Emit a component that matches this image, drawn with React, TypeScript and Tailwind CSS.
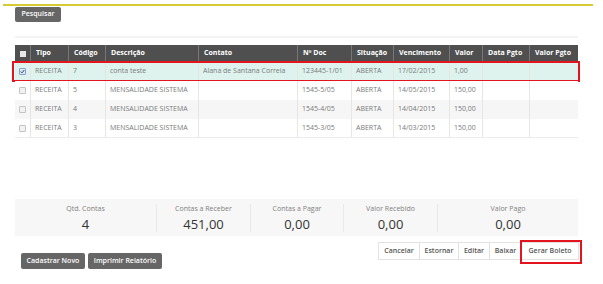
import React from 'react';

const cols = [
  { key: 'chk', label: '', w: 'w-[16px]' },
  { key: 'tipo', label: 'Tipo', w: 'w-[38px]' },
  { key: 'codigo', label: 'Código', w: 'w-[37px]' },
  { key: 'desc', label: 'Descrição', w: 'w-[93px]' },
  { key: 'contato', label: 'Contato', w: 'w-[99px]' },
  { key: 'doc', label: 'Nº Doc', w: 'w-[54px]' },
  { key: 'sit', label: 'Situação', w: 'w-[42px]' },
  { key: 'venc', label: 'Vencimento', w: 'w-[56px]' },
  { key: 'valor', label: 'Valor', w: 'w-[33px]' },
  { key: 'dataPgto', label: 'Data Pgto', w: 'w-[47px]' },
  { key: 'valorPgto', label: 'Valor Pgto', w: 'w-[48px]' },
];

const rows = [
  { tipo: 'RECEITA', codigo: '7', desc: 'conta teste', contato: 'Alana de Santana Correia', doc: '123445-1/01', sit: 'ABERTA', venc: '17/02/2015', valor: '1,00', selected: true },
  { tipo: 'RECEITA', codigo: '5', desc: 'MENSALIDADE SISTEMA', contato: '', doc: '1545-5/05', sit: 'ABERTA', venc: '14/05/2015', valor: '150,00' },
  { tipo: 'RECEITA', codigo: '4', desc: 'MENSALIDADE SISTEMA', contato: '', doc: '1545-4/05', sit: 'ABERTA', venc: '14/04/2015', valor: '150,00' },
  { tipo: 'RECEITA', codigo: '3', desc: 'MENSALIDADE SISTEMA', contato: '', doc: '1545-3/05', sit: 'ABERTA', venc: '14/03/2015', valor: '150,00' },
];

const totals = [
  { label: 'Qtd. Contas', value: '4', w: 'w-[141px]' },
  { label: 'Contas a Receber', value: '451,00', w: 'w-[94px]' },
  { label: 'Contas a Pagar', value: '0,00', w: 'w-[93px]' },
  { label: 'Valor Recebido', value: '0,00', w: 'w-[94px]' },
  { label: 'Valor Pago', value: '0,00', w: 'w-[141px]' },
];

const actions = [
  { label: 'Cancelar', w: 'w-[42px]' },
  { label: 'Estornar', w: 'w-[40px]' },
  { label: 'Editar', w: 'w-[32px]' },
  { label: 'Baixar', w: 'w-[33px]' },
];

const Checkbox = ({ checked = false, header = false }: { checked?: boolean; header?: boolean }) => {
  if (header) return <span className="block w-[6px] h-[6px] bg-[#e8e8e8]" />;
  return (
    <span
      className={`flex items-center justify-center w-[7px] h-[7px] rounded-[1px] border ${
        checked ? 'border-[#8aa2c8] bg-[#dfe8f6]' : 'border-[#c4c4c4] bg-[#f2f2f2]'
      }`}
    >
      {checked && (
        <svg width="5" height="5" viewBox="0 0 10 10">
          <path d="M1.5 5.2 L4 7.7 L8.6 2" stroke="#2a3f66" strokeWidth="2" fill="none" />
        </svg>
      )}
    </span>
  );
};

export default function App() {
  return (
    <div className="relative w-[603px] h-[284px] bg-white overflow-hidden text-[#777]" style={{ fontFamily: '"Open Sans", "Liberation Sans", sans-serif' }}>
      <div className="ml-[3px] mt-[4px] w-[590px] h-[2px] bg-[#d6cb35]" />

      <button className="ml-[15px] mt-[1px] w-[46px] h-[15px] bg-[#666] rounded-[2px] text-white text-[7px] font-semibold flex items-center justify-center">
        Pesquisar
      </button>

      <div className="ml-[15px] mt-[14px] w-[563px] h-[2px] bg-[#f3f3f3]" />

      {/* grid */}
      <div className="ml-[15px] mt-[7px] w-[563px]">
        <div className="flex h-[17px] bg-[#4f4f4f] text-white text-[7px] font-bold">
          {cols.map((c, i) => (
            <div
              key={c.key}
              className={`${c.w} flex items-center ${i === 0 ? 'justify-center' : 'px-[5px]'} ${i < cols.length - 1 ? 'border-r border-[#777]' : ''}`}
            >
              {i === 0 ? <Checkbox header /> : c.label}
            </div>
          ))}
        </div>

        {rows.map((r, ri) => {
          const cells = ['', r.tipo, r.codigo, r.desc, r.contato, r.doc, r.sit, r.venc, r.valor, '', ''];
          const bg = r.selected ? 'bg-[#def3ee]' : ri === 2 ? 'bg-[#f6f6f6]' : 'bg-white';
          return (
            <div key={ri} className={`relative flex h-[19px] text-[7px] text-[#7a7a7a] ${bg} ${ri === rows.length - 1 ? 'border-b border-[#ececec]' : ''}`}>
              {cols.map((c, i) => (
                <div
                  key={c.key}
                  className={`${c.w} flex items-center whitespace-nowrap ${i === 0 ? 'justify-center' : 'px-[4px]'} ${i < cols.length - 1 ? 'border-r border-[#e6e6e6]' : ''}`}
                >
                  {i === 0 ? <Checkbox checked={!!r.selected} /> : cells[i]}
                </div>
              ))}
              {r.selected && (
                <span className="absolute -left-[3px] -right-[2px] -top-[1px] -bottom-[1px] border-2 border-[#e3141d] pointer-events-none" />
              )}
            </div>
          );
        })}
      </div>

      {/* totals */}
      <div className="ml-[15px] mt-[61px] w-[563px] h-[37px] bg-[#f7f7f7] flex items-center">
        {totals.map((t, i) => (
          <div
            key={t.label}
            className={`${t.w} h-[28px] flex flex-col items-center justify-between ${i > 0 ? 'border-l border-[#e9e9e9]' : ''}`}
          >
            <span className="text-[7px] leading-[9px] text-[#808080]">{t.label}</span>
            <span className="text-[13px] leading-[16px] text-[#333]">{t.value}</span>
          </div>
        ))}
      </div>

      {/* bottom buttons */}
      <div className="flex items-start justify-between mt-[6px]">
        <div className="flex gap-[3px] ml-[21px] mt-[11px]">
          <button className="w-[64px] h-[16px] bg-[#666] rounded-[2px] text-white text-[7px] font-semibold flex items-center justify-center">
            Cadastrar Novo
          </button>
          <button className="w-[74px] h-[16px] bg-[#666] rounded-[2px] text-white text-[7px] font-semibold flex items-center justify-center">
            Imprimir Relatório
          </button>
        </div>

        <div className="flex mr-[24px]">
          {actions.map((a) => (
            <button
              key={a.label}
              className={`${a.w} h-[18px] bg-white border border-[#e2e2e2] -ml-px first:ml-0 text-[7px] font-semibold text-[#555] flex items-center justify-center`}
            >
              {a.label}
            </button>
          ))}
          <div className="relative -ml-px">
            <button className="w-[58px] h-[18px] bg-white border border-[#e2e2e2] text-[7px] font-semibold text-[#555] flex items-center justify-center">
              Gerar Boleto
            </button>
            <span className="absolute -left-[1px] -right-[3px] -top-[2px] -bottom-[4px] border-2 border-[#e3141d] pointer-events-none" />
          </div>
        </div>
      </div>
    </div>
  );
}
